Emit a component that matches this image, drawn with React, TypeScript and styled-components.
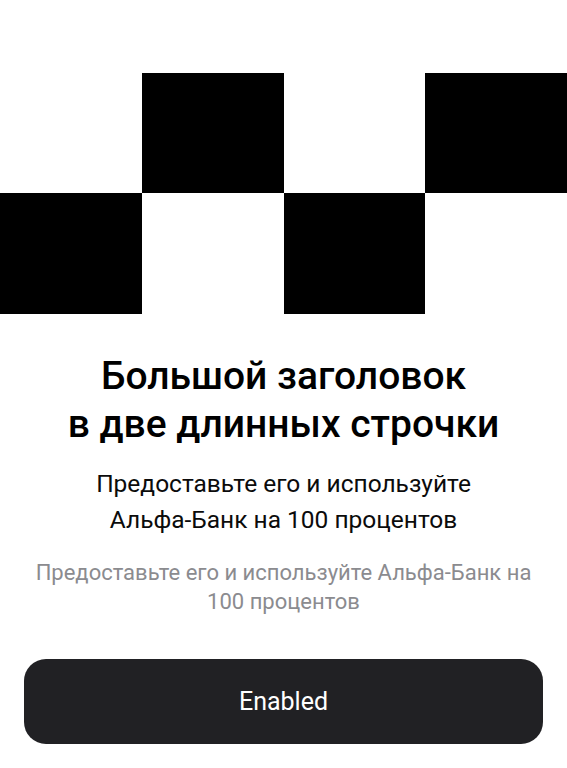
import React from "react";
import styled, { createGlobalStyle } from "styled-components";

const Global = createGlobalStyle`
  html, body { margin: 0; padding: 0; background: #ffffff; }
  body { font-family: Roboto, "Noto Sans", "Liberation Sans", sans-serif; }
`;

const Page = styled.div`
  width: 567px;
  height: 768px;
  display: flex;
  flex-direction: column;
  background: #ffffff;
  overflow: hidden;
`;

const Pattern = styled.div`
  margin-top: 73px;
  display: grid;
  grid-template-columns: repeat(4, 1fr);
  grid-template-rows: 120px 121px;
`;

const Cell = styled.div<{ $dark: boolean }>`
  background: ${(p) => (p.$dark ? "#000000" : "#ffffff")};
`;

const Content = styled.div`
  display: flex;
  flex-direction: column;
  align-items: center;
  text-align: center;
  padding: 0 20px;
`;

const Title = styled.h1`
  margin: 38px 0 0;
  font-size: 39px;
  line-height: 48px;
  font-weight: 500;
  color: #000000;
`;

const Subtitle = styled.p`
  margin: 18px 0 0;
  font-size: 24.5px;
  line-height: 36px;
  font-weight: 400;
  color: #0b0b0b;
`;

const Caption = styled.p`
  margin: 20px 0 0;
  font-size: 22px;
  line-height: 29px;
  font-weight: 400;
  color: #8b8b8f;
`;

const Button = styled.button`
  margin: 43px 24px 0;
  height: 85px;
  border: none;
  border-radius: 22px;
  background: #212124;
  color: #ffffff;
  font-family: Roboto, "Noto Sans", "Liberation Sans", sans-serif;
  font-size: 25px;
  font-weight: 400;
`;

const cells = [false, true, false, true, true, false, true, false];

export default function App() {
  return (
    <>
      <Global />
      <Page>
        <Pattern>
          {cells.map((d, i) => (
            <Cell key={i} $dark={d} />
          ))}
        </Pattern>
        <Content>
          <Title>
            Большой заголовок
            <br />в две длинных строчки
          </Title>
          <Subtitle>
            Предоставьте его и используйте
            <br />
            Альфа-Банк на 100 процентов
          </Subtitle>
          <Caption>
            Предоставьте его и используйте Альфа-Банк на 100 процентов
          </Caption>
        </Content>
        <Button>Enabled</Button>
      </Page>
    </>
  );
}
